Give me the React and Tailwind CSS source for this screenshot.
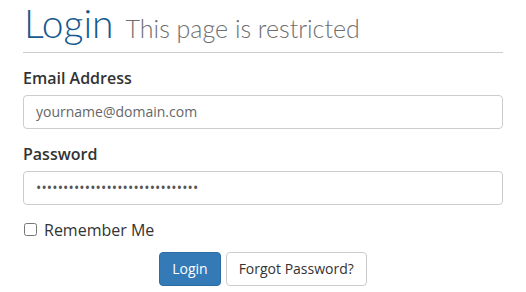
export default function App() {
  return (
    <div className="w-[526px] h-[292px] bg-white font-['Open_Sans',sans-serif] text-[#333]">
      <div className="pl-[23px] w-[503px]">
        {/* Header */}
        <div className="pt-[3px] pb-[4px] border-b border-[#ccc] flex items-baseline gap-[12px]">
          <h1 className="font-['Lato',sans-serif] font-light text-[39px] leading-[40px] text-[#14598f] pl-[1px]">Login</h1>
          <span className="font-['Lato',sans-serif] font-light text-[25px] text-[#6f6f6f]">This page is restricted</span>
        </div>

        {/* Form */}
        <div className="mt-[14px]">
          <label className="block text-[16px] font-semibold leading-[22px] mb-[6px]">Email Address</label>
          <input
            type="text"
            placeholder="yourname@domain.com"
            className="block w-full h-[34px] px-[12px] text-[14px] border border-[#ccc] rounded-[4px] placeholder:text-[#666] outline-none"
          />
        </div>
        <div className="mt-[14px]">
          <label className="block text-[16px] font-semibold leading-[22px] mb-[6px]">Password</label>
          <input
            type="password"
            defaultValue="123456789012345678901234567890"
            className="block w-full h-[34px] px-[12px] text-[14px] text-[#555] border border-[#ccc] rounded-[4px] outline-none tracking-[0.15px]"
          />
        </div>

        <label className="flex items-center mt-[14px] text-[16px] leading-[22px]">
          <input type="checkbox" className="w-[13px] h-[13px] ml-[1px] mr-[7px]" />
          Remember Me
        </label>

        <div className="flex justify-center gap-[5px] mt-[11px]">
          <button className="h-[34px] px-[12px] text-[14px] text-white bg-[#337ab7] border border-[#2e6da4] rounded-[4px]">Login</button>
          <button className="h-[34px] px-[12px] text-[14px] text-[#333] bg-white border border-[#ccc] rounded-[4px]">Forgot Password?</button>
        </div>
      </div>
    </div>
  );
}
